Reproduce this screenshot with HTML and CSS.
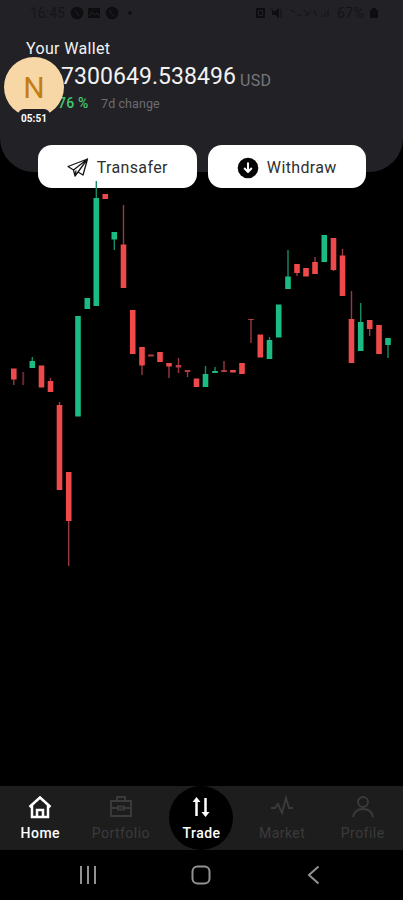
FILE: index.html
```
<!DOCTYPE html>
<html lang="en">
<head>
<meta charset="utf-8">
<title>Wallet</title>
<link rel="stylesheet" href="styles.css">
</head>
<body>
<div class="app">
  <header class="wallet">
    <div class="status">
      <span class="clock">16:45</span>
      <svg class="status-left" width="66" height="14" viewBox="0 0 66 14"><circle cx="7" cy="7" r="6.3"/><path d="M18 2h12v10H18z"/><circle cx="42" cy="7" r="6.3"/><circle cx="60" cy="7" r="1.8"/><path class="cut" d="M5 4l4 6M19 10l3-4 3 3 2-2 2 3M40 4c0 3 2 5 5 6"/></svg>
      <svg class="status-right" width="78" height="14" viewBox="0 0 78 14"><path d="M1 2h9v10H1zM17 5h3l4-3v10l-4-3h-3z"/><path class="cut" d="M3.500 4.500h4v5h-4z"/><path class="line" d="M16 2l8 10M26 3v9M35 4l5 2M42 9h5M49 4l5 5M50 10l6-5M58 4l4 6M67 11V9M70 11V7M73 11V4"/></svg>
      <span class="battery">67%</span>
      <svg width="8" height="12" viewBox="0 0 8 12"><path d="M2 1h4v2h2v8H0V3h2z"/></svg>
    </div>
    <div class="title">Your Wallet</div>
    <div class="balance"><span class="amount">7300649.538496</span><span class="currency">USD</span></div>
    <div class="change"><span class="percent">76 %</span><span class="period">7d change</span></div>
    <div class="bubble">
      <div class="avatar">N</div>
      <span class="timer">05:51</span>
    </div>
  </header>
  <div class="actions">
    <button class="action"><svg width="22" height="20" viewBox="0 0 22 20"><path d="M1 8.5L20.5 1 16 17l-5-3-3 4-1.5-6zM6.500 12L20.500 1 11 14M8 18l1-5.500M1 8.500l5.500 3.500"/></svg><span>Transafer</span></button>
    <button class="action withdraw"><svg width="22" height="22" viewBox="0 0 22 22"><circle cx="11" cy="11" r="10.300"/><path d="M11 5.500v9M7.200 11l3.800 4 3.800-4"/></svg><span>Withdraw</span></button>
  </div>
  <main class="chart">
    <svg width="403" height="606" viewBox="0 180 403 606">
      <path class="wick up" d="M32.300 357V368M96.300 181V200M114.300 238V250M205.500 366V376M215 367V373M269.500 337V342M288 250V278M360.700 303V324M388 344V358"/>
      <path class="wick down" d="M13.800 378V385M50.500 378V383M59.500 402V407M68.700 520V566M123.500 205V247M142 364V375M169 365V378M178.500 358V373M187.500 371V377M224 361V371M251 319V343M297 272V276M315 257V263M333.500 269V271M342.500 249V257M351.500 291V320M369.700 328V336"/>
      <path class="wick dim" d="M23.200 372V385"/>
      <path class="body up" d="M32.300 361V368M78 316V416.500M87.300 298V309M96.300 198V306M114.300 232V239.500M205.500 374V387M215 371V373M269.500 340V359M278.700 304.500V337.500M288 276.500V289M324.300 235V262M360.700 322V351M388 338V345"/>
      <path class="body down" d="M13.800 368.500V379.500M41.500 365.500V387.500M50.500 381V392M59.500 405V490M68.700 472V521M105.300 194V199M123.500 244.500V288M132.700 310V354M142 347V365.500M160 352V362M169 363V366.500M196.500 378.500V387M233 370V372.500M242 363V374M260.300 334.500V357.500M297 264V273M306 268V276.500M315 262V274M333.500 238V270M342.500 255.500V296M351.500 319V363M369.700 320V329M379 325V354"/>
      <path class="body faint" d="M151 354.500V356.500M178.500 365V367.500M187.500 370V372M224 370V372M251 319V320"/>
    </svg>
  </main>
  <nav class="tabs">
    <a class="tab active"><svg width="24" height="24" viewBox="0 0 24 24"><path d="M1.500 12L12 2.500 22.500 12M4 10v12h16V10M9 22v-7h6v7"/></svg><span>Home</span></a>
    <a class="tab"><svg width="24" height="24" viewBox="0 0 24 24"><path d="M2 6h20v15H2zM8 6V2h8v4M2 13h7M15 13h7M9 11.500h6v3H9z"/></svg><span>Portfolio</span></a>
    <a class="tab trade"><svg width="24" height="24" viewBox="0 0 24 24"><path d="M7.500 21V5M16.500 3v16"/><path class="solid" d="M7.500 2l4 5h-8zM16.500 22l4-5h-8z"/></svg><span>Trade</span></a>
    <a class="tab"><svg width="24" height="24" viewBox="0 0 24 24"><path d="M1 13h4l3-4 4 9 4-15 3 10h4"/></svg><span>Market</span></a>
    <a class="tab"><svg width="24" height="24" viewBox="0 0 24 24"><circle cx="12" cy="7" r="5"/><path d="M2 22c1-5 4-8 10-8s9 3 10 8"/></svg><span>Profile</span></a>
  </nav>
  <footer class="system">
    <svg width="20" height="20" viewBox="0 0 20 20"><path d="M3 1v18M10 1v18M17 1v18"/></svg>
    <svg width="20" height="20" viewBox="0 0 20 20"><rect x="1.500" y="1.500" width="17" height="17" rx="5"/></svg>
    <svg width="20" height="20" viewBox="0 0 20 20"><path d="M14.500 1.500L5 10l9.500 8.500"/></svg>
  </footer>
</div>
</body>
</html>
```
FILE: styles.css
```
* { box-sizing: border-box; }
body { margin: 0; background: #000; font-family: Roboto, sans-serif; }
svg { display: block; flex: none; }
.app { width: 403px; height: 900px; display: flex; flex-direction: column; overflow: hidden; }

.wallet { position: relative; height: 172px; flex: none; background: #222126; border-radius: 0 0 34px 34px; color: #f2f2f2; }
.status { display: flex; align-items: center; height: 26px; padding-left: 30px; color: #0e0e11; font-size: 14px; }
.status svg { fill: #0e0e11; }
.status .cut { fill: none; stroke: #222126; }
.status .line { fill: none; stroke: #121216; }
.clock { width: 40px; color: #151519; }
.status-right { margin-left: 119px; }
.battery { width: 29px; margin: 0 4px 0 4px; color: #131317; letter-spacing: .4px; }
.title { margin: 12px 0 0 26px; font-size: 16px; line-height: 21px; letter-spacing: .35px; }
.balance { display: flex; align-items: flex-start; margin-left: 61px; height: 34px; }
.amount { font-size: 23px; line-height: 36px; letter-spacing: .06px; }
.currency { margin-left: 4px; font-size: 16px; line-height: 44px; letter-spacing: .3px; color: #77767b; }
.change { display: flex; align-items: center; height: 20px; margin-left: 58px; }
.percent { width: 43px; font-size: 14px; font-weight: 500; letter-spacing: .2px; color: #42c86c; }
.period { font-size: 12.500px; letter-spacing: .1px; color: #6d6c71; }
.bubble { position: absolute; left: 4px; top: 57px; width: 60px; height: 69px; }
.avatar { width: 60px; height: 60px; border-radius: 50%; background: #f8d7a7; color: #c47e13; font-size: 30px; line-height: 61px; text-align: center; }
.timer { position: absolute; left: 14px; top: 52px; width: 32px; height: 17px; border-radius: 6px; background: #222126; color: #fff; font-size: 10px; font-weight: 700; line-height: 19px; text-align: center; }

.actions { display: flex; gap: 11px; height: 43px; margin: -27px 37px 0 38px; flex: none; z-index: 1; }
.action { flex: 1; display: flex; align-items: center; justify-content: center; gap: 8px; padding: 2px 0 0; border: 0; border-radius: 14px; background: #fff; color: #303030; font: 16px Roboto, sans-serif; letter-spacing: .35px; }
.action path { fill: none; stroke: #161616; stroke-width: 1.300; stroke-linejoin: round; }
.action.withdraw circle { fill: #050505; }
.action.withdraw path { stroke: #fff; stroke-width: 2; }

.chart { height: 606px; margin-top: -8px; flex: none; z-index: 2; }
.chart path { fill: none; }
.wick { stroke-width: 1.400; }
.body { stroke-width: 5.600; }
.wick.up { stroke: #168b63; }
.wick.down { stroke: #97393e; }
.wick.dim { stroke: #6a282e; stroke-width: 2; }
.body.up { stroke: #1abc83; }
.body.down { stroke: #ef4a4b; }
.body.faint { stroke: #b33d43; }

.tabs { display: grid; grid-template-columns: repeat(5, 80.600px); height: 64px; flex: none; background: #1d1d1d; }
.tab { display: flex; flex-direction: column; align-items: center; padding-top: 9px; color: #3b3b3b; font-size: 14px; letter-spacing: .45px; line-height: 20px; gap: 4px; }
.tab svg { fill: none; stroke: currentColor; stroke-width: 1.900; }
.tab .solid { fill: currentColor; stroke: none; }
.active, .trade { color: #fff; font-weight: 500; }
.active svg { stroke-width: 2.500; }
.trade { width: 64px; height: 64px; justify-self: center; border-radius: 50%; background: #000; letter-spacing: .5px; }
.trade svg { stroke-width: 2.500; }
.system { display: flex; justify-content: space-between; align-items: center; height: 50px; padding: 0 79px 0 78px; }
.system svg { fill: none; stroke: #929292; stroke-width: 2; }
```
